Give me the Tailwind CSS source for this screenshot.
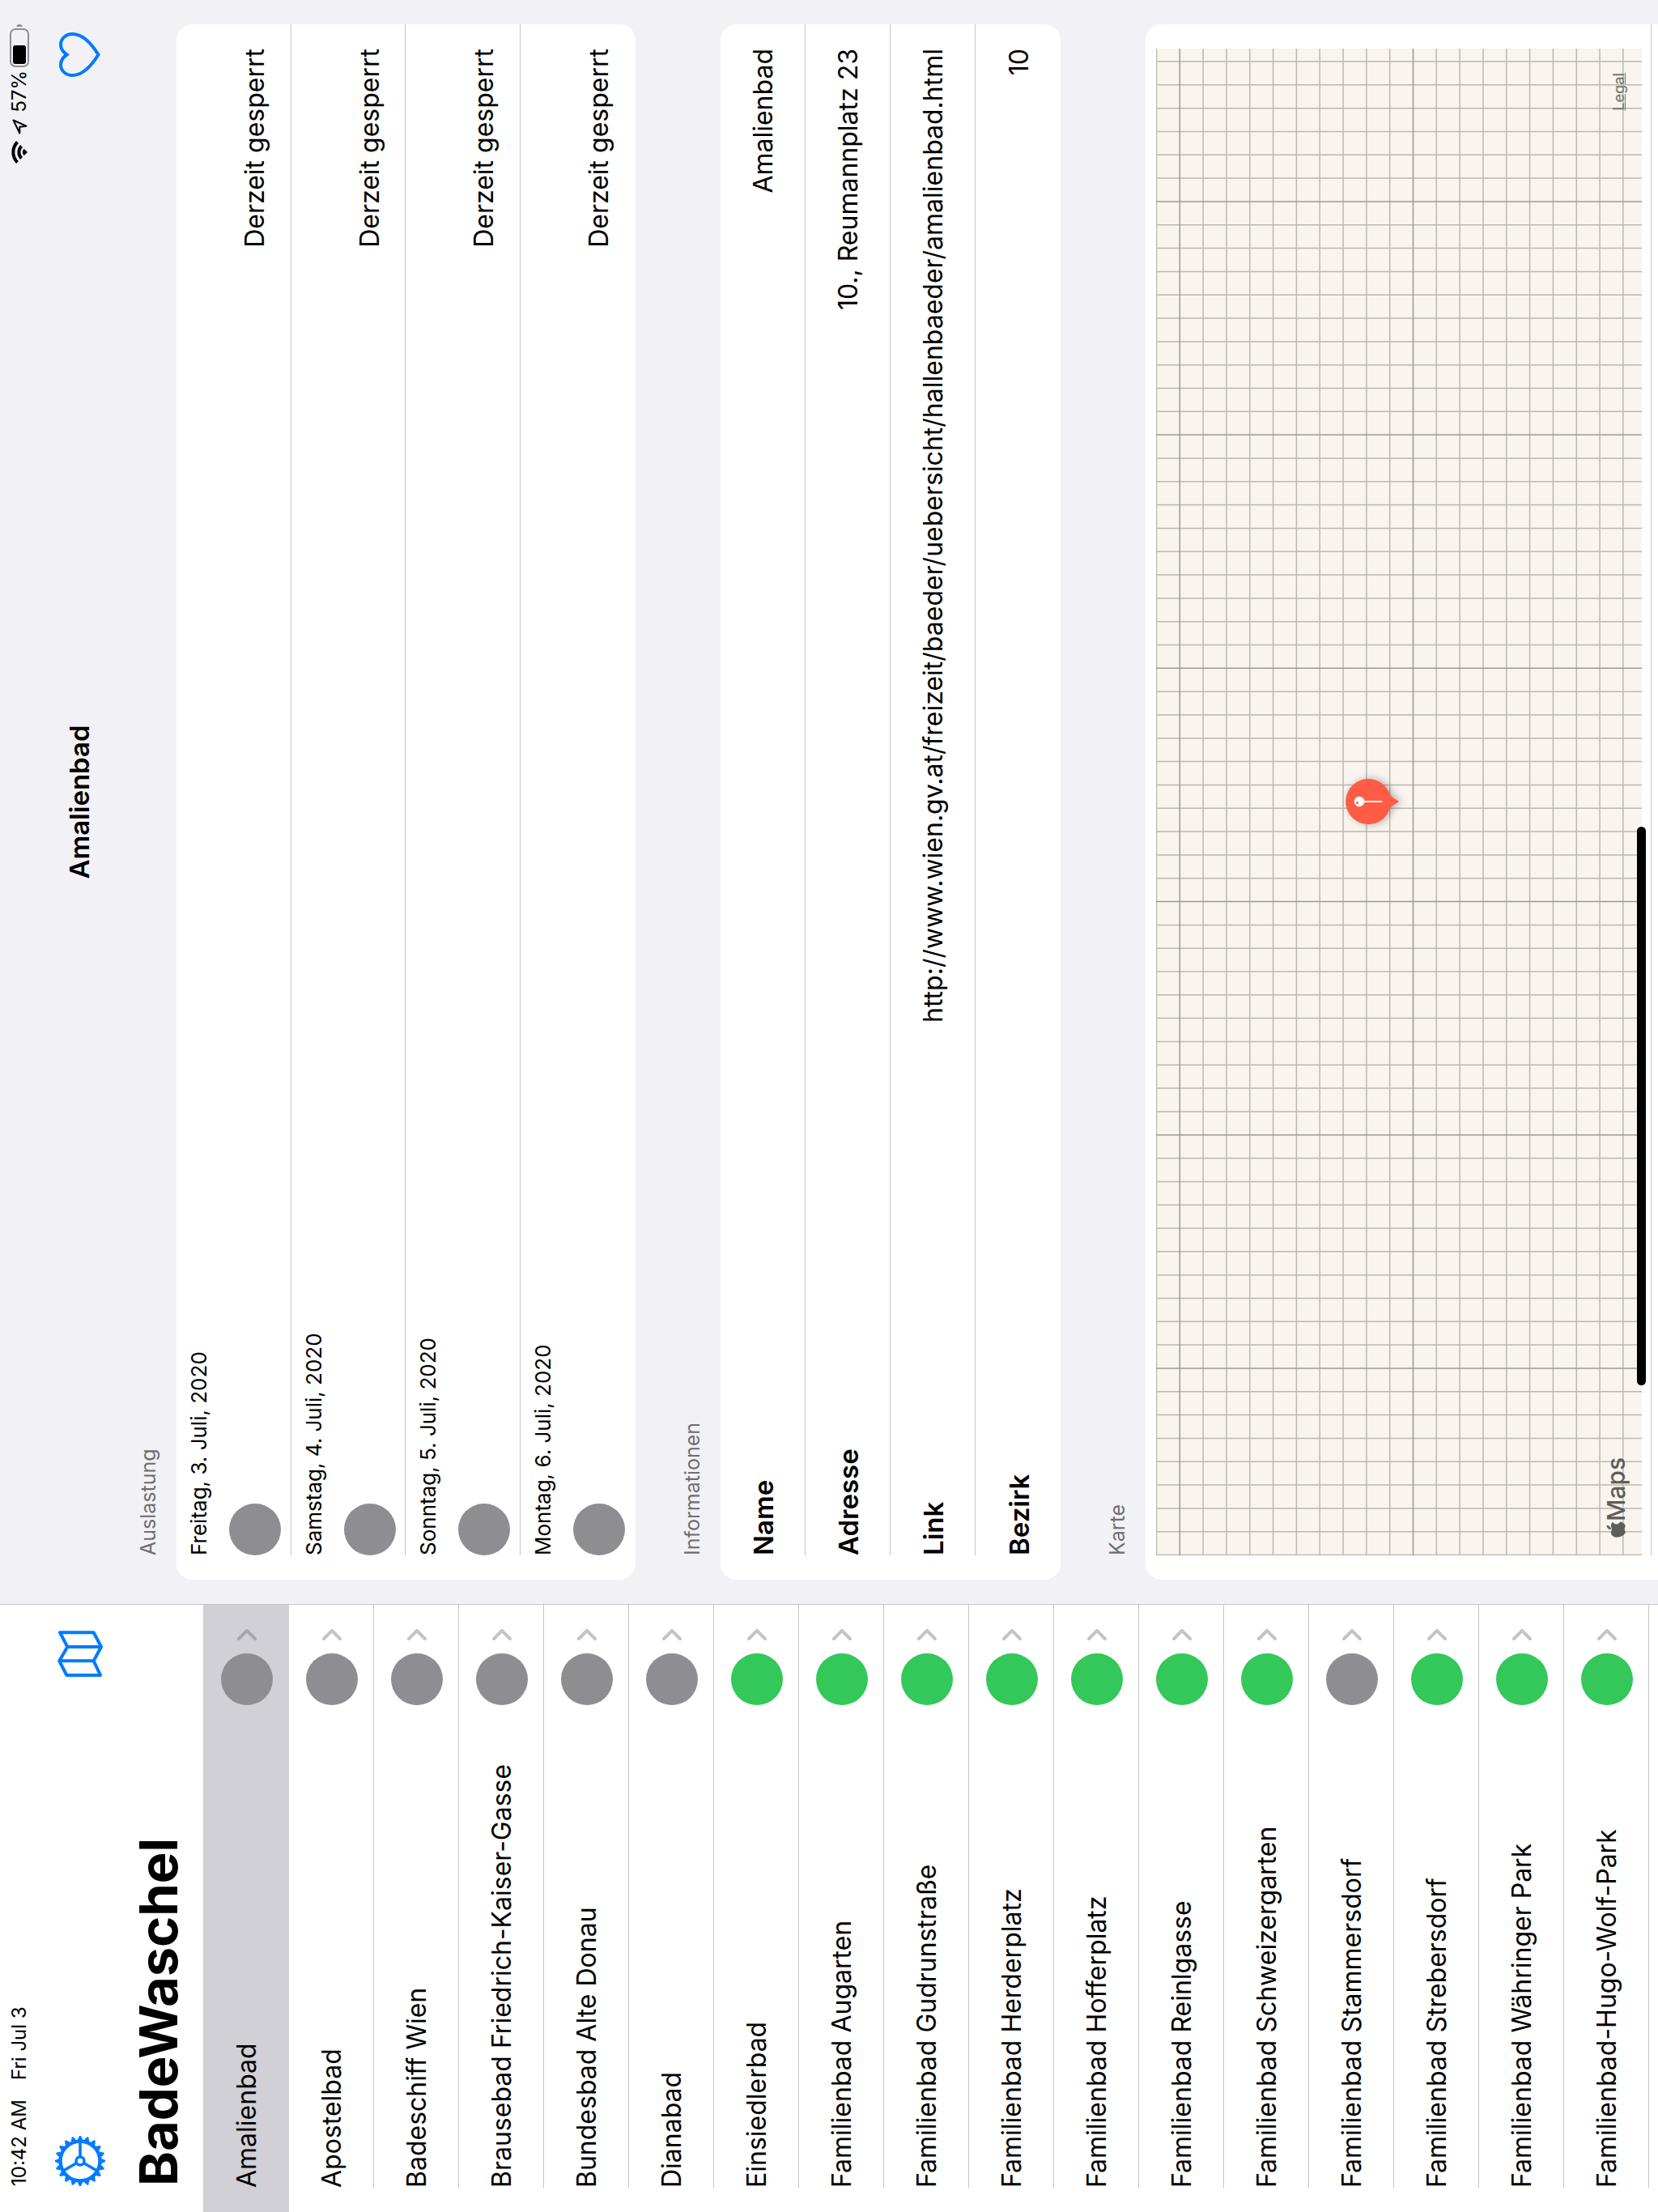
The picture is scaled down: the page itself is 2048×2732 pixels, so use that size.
<!DOCTYPE html>
<html lang="de">
<head>
<meta charset="utf-8">
<title>BadeWaschel</title>
<script src="https://cdn.jsdelivr.net/npm/@tailwindcss/browser@4"></script>
</head>
<body class="flex h-screen items-center justify-center overflow-hidden bg-white">
<!-- Landscape screen, turned a quarter to the left -->
<div class="relative flex h-[100vw] w-[100vh] shrink-0 -rotate-90 overflow-hidden bg-[#f2f1f6] font-['Inter',sans-serif] text-[32px] leading-10 text-black">

  <aside class="flex w-[751px] shrink-0 flex-col border-r border-[#c6c6c8] bg-white">
    <div class="flex h-12 shrink-0 items-center gap-6 pl-8 text-2xl">
      <span>10:42 AM</span><span>Fri Jul 3</span>
    </div>
    <div class="flex h-[100px] shrink-0 items-center justify-between px-8 pt-0.5 text-[#007aff]">
      <button type="button" aria-label="Einstellungen">
        <svg class="h-[62px] w-[62px]" viewBox="-31 -31 62 62" fill="none" stroke="currentColor">
          <circle r="24.5" stroke-width="4.5"/>
          <circle r="27" stroke-width="4" pathLength="80" stroke-dasharray="2.4 1.6" stroke-dashoffset="1.2"/>
          <circle r="29.5" stroke-width="3" pathLength="80" stroke-dasharray="1.2 2.8" stroke-dashoffset="0.6"/>
          <circle r="5" stroke-width="3.6"/>
          <path d="M6 0H24M-3 5.2L-12 20.8M-3 -5.2L-12 -20.8" stroke-width="3.6"/>
        </svg>
      </button>
      <button type="button" aria-label="Karte anzeigen">
        <svg class="h-14 w-[57px]" viewBox="0 0 57 56" fill="none" stroke="currentColor" stroke-width="4" stroke-linejoin="round">
          <path d="M2 11.3L19.7 2.3L37 12.3L54.7 3V44.7L37 54L19.7 44.7L2 53ZM19.7 2.3V44.7M37 12.3V54"/>
        </svg>
      </button>
    </div>
    <h1 class="h-[103px] shrink-0 pl-8 text-[65px] leading-24 font-bold">BadeWaschel</h1>
    <ul id="pools"></ul>
  </aside>

  <main class="flex min-w-0 flex-1 flex-col">
    <div class="flex h-12 shrink-0 items-center justify-end pr-[30px] text-2xl">
      <svg class="mr-2 h-5 w-7" viewBox="0 0 28 20" fill="none" stroke="#000" stroke-width="4">
        <path d="M1.5 7.5A17.7 17.7 0 0 1 26.5 7.5M6.5 12.5A10.6 10.6 0 0 1 21.5 12.5"/>
        <path d="M14 20L9.8 15.6A6 6 0 0 1 18.2 15.6Z" fill="#000" stroke="none"/>
      </svg>
      <svg class="mr-2 h-[19px] w-[19px]" viewBox="0 0 19 19" fill="none" stroke="#000" stroke-width="2" stroke-linejoin="round">
        <path d="M17.5 1.5L1.5 9.3H9.3L10.3 17.5Z"/>
      </svg>
      <span class="mr-1">57%</span>
      <svg class="h-6 w-[53px]" viewBox="0 0 53 24">
        <rect x="1" y="1" width="46" height="22" rx="6" fill="none" stroke="#8e8e93" stroke-width="2"/>
        <rect x="4" y="4" width="23" height="16" rx="3"/>
        <path d="M50 8C54 9 54 15 50 16Z" fill="#8e8e93"/>
      </svg>
    </div>
    <header class="grid h-[100px] shrink-0 grid-cols-[1fr_auto_1fr] items-center px-10">
      <h2 class="col-start-2 text-[33px] font-semibold">Amalienbad</h2>
      <button type="button" aria-label="Favorit" class="justify-self-end">
        <svg class="h-[51px] w-[55px]" viewBox="0 0 55 51" fill="none" stroke="#007aff" stroke-width="4">
          <path d="M27.5 9.5C24 4.5 19.5 2 15 2C8 2 2 8 2 16.5C2 29 13 39.5 27.5 48.5C42 39.5 53 29 53 16.5C53 8 47 2 40 2C35.5 2 31 4.5 27.5 9.5Z"/>
        </svg>
      </button>
    </header>

    <div class="flex min-h-0 flex-1 flex-col gap-[54px] px-[30px] pt-[19px]">
      <section class="shrink-0">
        <h3 class="pb-[19px] pl-[30px] text-[25px] leading-8 text-[#6d6d72]">Auslastung</h3>
        <ul id="days" class="overflow-hidden rounded-[20px] bg-white pl-[30px]"></ul>
      </section>

      <section class="shrink-0">
        <h3 class="pb-[19px] pl-[30px] text-[25px] leading-8 text-[#6d6d72]">Informationen</h3>
        <dl class="overflow-hidden rounded-[20px] bg-white pl-[30px]">
          <div class="flex h-[105px] items-center justify-between border-b border-[#c6c6c8] pt-0.5 pr-[30px]"><dt class="text-[33px] font-semibold">Name</dt><dd>Amalienbad</dd></div>
          <div class="flex h-[105px] items-center justify-between border-b border-[#c6c6c8] pt-0.5 pr-[30px]"><dt class="text-[33px] font-semibold">Adresse</dt><dd>10., Reumannplatz 23</dd></div>
          <div class="flex h-[105px] items-center justify-between border-b border-[#c6c6c8] pt-0.5 pr-[30px]"><dt class="text-[33px] font-semibold">Link</dt><dd><a href="http://www.wien.gv.at/freizeit/baeder/uebersicht/hallenbaeder/amalienbad.html">http://www.wien.gv.at/freizeit/baeder/uebersicht/hallenbaeder/amalienbad.html</a></dd></div>
          <div class="flex h-[105px] items-center justify-between pt-0.5 pr-[30px]"><dt class="text-[33px] font-semibold">Bezirk</dt><dd>10</dd></div>
        </dl>
      </section>

      <section class="flex min-h-0 flex-1 flex-col overflow-hidden">
        <h3 class="pb-[19px] pl-[30px] text-[25px] leading-8 text-[#6d6d72]">Karte</h3>
        <div class="min-h-0 flex-1 rounded-t-[20px] bg-white pt-[13px] pl-[30px]">
          <div class="border-b border-[#c6c6c8] pb-[11px]">
            <div class="relative mr-[30px] h-[600px] overflow-hidden bg-[#f9f4ed]">
              <svg id="grid" class="absolute inset-0 h-full w-full" fill="none" stroke-width="1.5">
                <path id="minor" stroke="#bbb8b0"/>
                <path id="major" stroke="#9c9a94"/>
              </svg>
              <svg class="absolute bottom-1/2 left-1/2 h-[66px] w-14 -translate-x-1/2 overflow-visible drop-shadow-[0_3px_5px_rgba(0,0,0,0.3)]" viewBox="0 0 56 66">
                <path d="M28 66Q27 65 25 61.5Q23 57.5 20 55A28 28 0 1 1 36 55Q33 57.5 31 61.5Q29 65 28 66Z" fill="#ff5b45"/>
                <path d="M27 22H29V44L28 46L27 44Z" fill="#fff"/>
                <circle cx="28" cy="17" r="6.3" fill="#fff"/>
                <circle cx="26.5" cy="14.5" r="1.5" fill="#ff5b45"/>
              </svg>
              <div class="absolute bottom-3 left-[22px] flex items-center text-[30px] font-medium text-[#5f5d59]">
                <svg class="h-[26px] w-5" viewBox="0 26 384 460" fill="currentColor"><path d="M318.7 268.7c-.2-36.7 16.4-64.4 50-84.8-18.8-26.9-47.2-41.7-84.7-44.6-35.5-2.8-74.3 20.7-88.5 20.7-15 0-49.4-19.7-76.4-19.7C63.3 141.2 4 184.8 4 273.5q0 39.3 14.4 81.2c12.8 36.7 59 126.7 107.2 125.2 25.2-.6 43-17.9 75.8-17.9 31.8 0 48.3 17.9 76.4 17.9 48.6-.7 90.4-82.5 102.6-119.3-65.2-30.7-61.7-90-61.7-91.9zm-56.6-164.2c27.3-32.4 24.8-61.9 24-72.5-24.1 1.4-52 16.4-67.9 34.9-17.5 19.8-27.8 44.3-25.6 71.9 26.1 2 49.9-11.4 69.5-34.3z"/></svg>
                <span>Maps</span>
              </div>
              <a href="#legal" class="absolute right-[30px] bottom-4 text-lg leading-6 font-medium text-[#7b7974] underline">Legal</a>
            </div>
          </div>
        </div>
      </section>
    </div>
  </main>

  <div class="absolute bottom-[15px] left-1/2 h-[11px] w-[690px] -translate-x-1/2 rounded-full bg-black"></div>
</div>

<script>
const GREY = "bg-[#8e8d92]", GREEN = "bg-[#34c759]";
const pools = [
  ["Amalienbad", GREY], ["Apostelbad", GREY], ["Badeschiff Wien", GREY],
  ["Brausebad Friedrich-Kaiser-Gasse", GREY], ["Bundesbad Alte Donau", GREY], ["Dianabad", GREY],
  ["Einsiedlerbad", GREEN], ["Familienbad Augarten", GREEN], ["Familienbad Gudrunstraße", GREEN],
  ["Familienbad Herderplatz", GREEN], ["Familienbad Hofferplatz", GREEN], ["Familienbad Reinlgasse", GREEN],
  ["Familienbad Schweizergarten", GREEN], ["Familienbad Stammersdorf", GREY], ["Familienbad Strebersdorf", GREEN],
  ["Familienbad Währinger Park", GREEN], ["Familienbad-Hugo-Wolf-Park", GREEN]
];
document.getElementById("pools").innerHTML = pools.map(([name, colour], i) => `
  <li class="pl-[30px] ${i === 0 ? "bg-[#d1d0d6] text-[#a8a7ac]" : "text-[#c4c4c6]"}">
    <a href="#pool-${i}" class="flex items-center pt-0.5 pr-[30px] ${i === 0 ? "h-[106px]" : "h-[105px] border-b border-[#c6c6c8]"}">
      <span class="flex-1 text-black">${name}</span>
      <span class="mr-4 size-16 rounded-full ${colour}"></span>
      <svg class="h-6 w-3.5" viewBox="0 0 14 24" fill="none" stroke="currentColor" stroke-width="4" stroke-linecap="round" stroke-linejoin="round"><path d="M2 2L12 12L2 22"/></svg>
    </a>
  </li>`).join("");

const days = ["Freitag, 3. Juli, 2020", "Samstag, 4. Juli, 2020", "Sonntag, 5. Juli, 2020", "Montag, 6. Juli, 2020"];
document.getElementById("days").innerHTML = days.map((day, i) => `
  <li class="pt-3 pr-[30px] ${i === 1 ? "h-[141px]" : "h-[142px]"} ${i === 3 ? "" : "border-b border-[#c6c6c8]"}">
    <p class="text-[26px] leading-8">${day}</p>
    <div class="mt-[21px] flex items-center justify-between">
      <span class="size-16 rounded-full bg-[#8e8d92]"></span><span>Derzeit gesperrt</span>
    </div>
  </li>`).join("");

/* Empty map tiles: a fine grid with every tenth line darker */
function drawGrid() {
  const grid = document.getElementById("grid"), step = 28.82;
  const width = grid.clientWidth, height = grid.clientHeight;
  let minor = "", major = "";
  for (let k = 0; k * step < width; k++) {
    const column = `M${(k * step + 0.5).toFixed(1)} 0V${height}`;
    if (k % 10 === 8) major += column; else minor += column;
  }
  for (let k = 0; k * step < height; k++) {
    const row = `M0 ${(k * step + 0.5).toFixed(1)}H${width}`;
    if (k % 10 === 1) major += row; else minor += row;
  }
  document.getElementById("minor").setAttribute("d", minor);
  document.getElementById("major").setAttribute("d", major);
}
drawGrid();
addEventListener("load", drawGrid);
addEventListener("resize", drawGrid);
</script>
</body>
</html>
